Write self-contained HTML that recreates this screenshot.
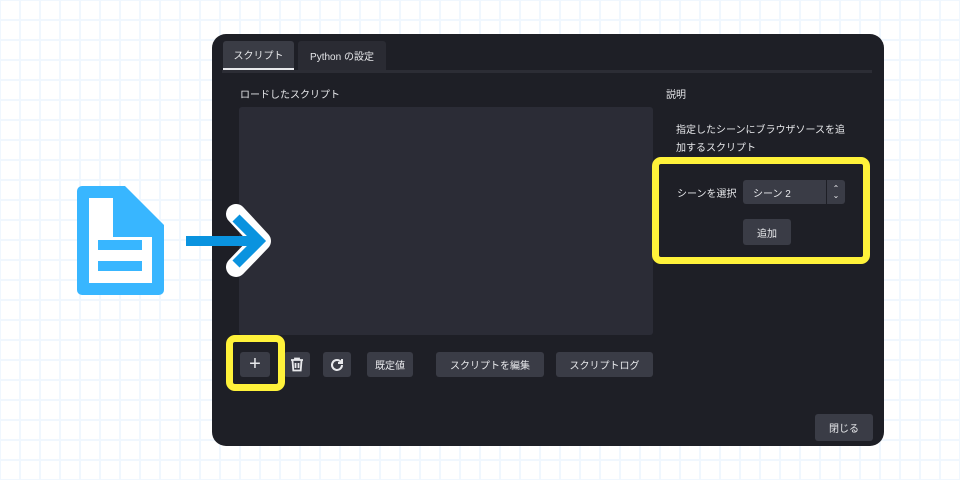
<!DOCTYPE html>
<html><head><meta charset="utf-8"><style>
*{margin:0;padding:0;box-sizing:border-box}
body{width:960px;height:480px;overflow:hidden;position:relative;background-color:#fff;
background-image:linear-gradient(#f0f7fe 2px,transparent 2px),linear-gradient(90deg,#f0f7fe 2px,transparent 2px);
background-size:20px 20px;background-position:0 19px,19px 0;
font-family:"Liberation Sans","Noto Sans CJK JP",sans-serif;color:#e6e7ea;font-size:10px}
.a{position:absolute}
.dlg{left:212px;top:34px;width:672px;height:412px;background:#1e1f26;border-radius:14px}
.btn{position:absolute;background:#3a3c46;border-radius:3px;display:flex;align-items:center;justify-content:center;font-size:10px;color:#e8e9ec}
.yel{position:absolute;border:7px solid #fff23a;border-radius:9px}
</style></head><body>
<div class="a dlg"></div>
<div class="a" style="left:223px;top:41px;width:71px;height:29px;background:#3a3c45;border-radius:3px 3px 0 0;border-bottom:2px solid #e8e9ec;display:flex;align-items:center;justify-content:center">スクリプト</div>
<div class="a" style="left:298px;top:41px;width:88px;height:29px;background:#2a2b33;border-radius:3px 3px 0 0;display:flex;align-items:center;justify-content:center">Python の設定</div>
<div class="a" style="left:222px;top:70px;width:650px;height:3px;background:#2c2d35"></div>
<div class="a" style="left:240px;top:86px">ロードしたスクリプト</div>
<div class="a" style="left:239px;top:107px;width:414px;height:228px;background:#2b2c36;border-radius:3px"></div>
<div class="btn" style="left:240px;top:352px;width:30px;height:25px;font-size:20px;font-weight:300">+</div>
<div class="btn" style="left:284px;top:352px;width:26px;height:25px"><svg width="14" height="15" viewBox="0 0 14 15" fill="none" stroke="#e8e9ec" stroke-width="1.8"><path d="M1 3h12M5 3V1.5h4V3M2.5 3.5l.8 10h7.4l.8-10M5.5 6v5M8.5 6v5"/></svg></div>
<div class="btn" style="left:323px;top:352px;width:28px;height:25px"><svg width="16" height="16" viewBox="0 0 16 16" fill="none" stroke="#e8e9ec" stroke-width="2"><path d="M13 8a5 5 0 1 1-2-4"/><path d="M13 2v4H9" fill="#e8e9ec"/></svg></div>
<div class="btn" style="left:367px;top:352px;width:46px;height:25px">既定値</div>
<div class="btn" style="left:436px;top:352px;width:108px;height:25px">スクリプトを編集</div>
<div class="btn" style="left:556px;top:352px;width:97px;height:25px">スクリプトログ</div>
<div class="yel" style="left:226px;top:335px;width:59px;height:56px"></div>
<div class="a" style="left:666px;top:86px">説明</div>
<div class="a" style="left:676px;top:122px;line-height:18px">指定したシーンにブラウザソースを追<br>加するスクリプト</div>
<div class="yel" style="left:652px;top:157px;width:218px;height:107px"></div>
<div class="a" style="left:677px;top:185px">シーンを選択</div>
<div class="btn" style="left:743px;top:180px;width:83px;height:24px;justify-content:flex-start;padding-left:10px;border-radius:3px 0 0 3px">シーン 2</div>
<div class="btn" style="left:827px;top:180px;width:18px;height:24px;border-radius:0 3px 3px 0;font-size:8px;line-height:7px;flex-direction:column">⌃<br>⌄</div>
<div class="btn" style="left:743px;top:219px;width:48px;height:26px">追加</div>
<div class="btn" style="left:815px;top:414px;width:58px;height:27px">閉じる</div>
<svg class="a" style="left:0;top:0" width="300" height="320" viewBox="0 0 300 320">
<path d="M82 186H125L164 225V290a5 5 0 0 1-5 5H82a5 5 0 0 1-5-5V191a5 5 0 0 1 5-5z" fill="#38b6ff"/>
<path d="M89 198H113V237H152V283H89z" fill="#fff"/>
<rect x="98" y="240" width="44" height="10" fill="#38b6ff"/>
<rect x="98" y="261" width="44" height="10" fill="#38b6ff"/>
<path d="M236 214l25 27-25 26" fill="none" stroke="#fff" stroke-width="20" stroke-linecap="round" stroke-linejoin="round"/>
<path d="M186 241h72M236 218l23 23-23 23" fill="none" stroke="#0a93df" stroke-width="10" stroke-linejoin="miter"/>
</svg>
</body></html>
